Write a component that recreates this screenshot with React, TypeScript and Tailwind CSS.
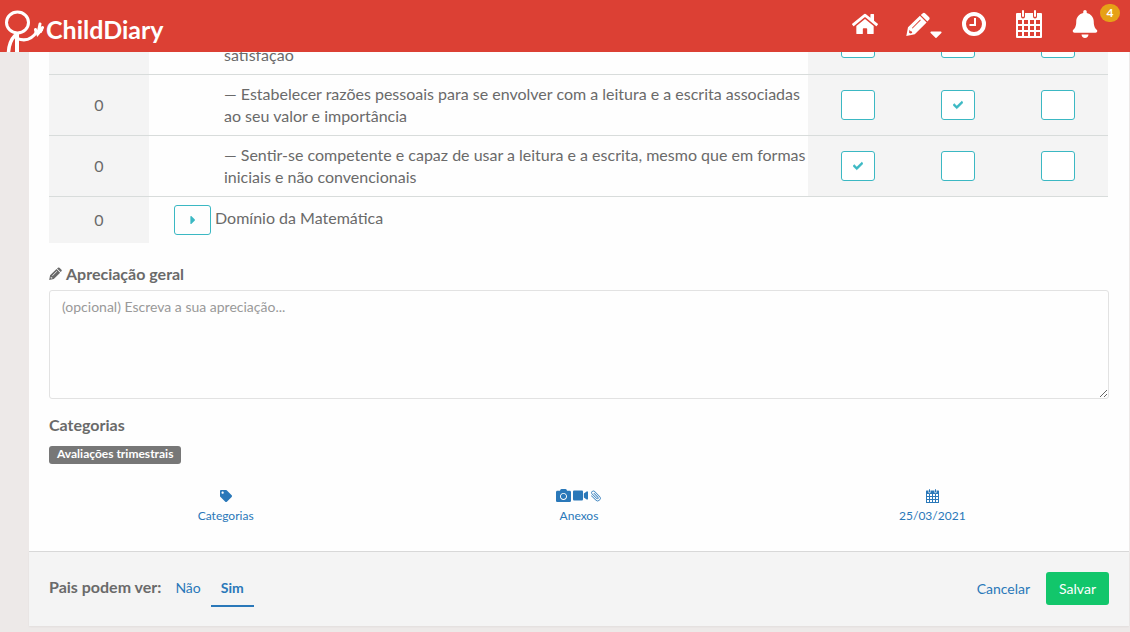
import React, { useState } from 'react';
import { FaBell, FaCamera, FaCaretDown, FaCaretRight, FaCheck, FaHome, FaTag, FaVideo } from 'react-icons/fa';
import { GoPaperclip } from 'react-icons/go';

type Goal = {
  id: string;
  text: string;
  levels: boolean[];
};

const goals: Goal[] = [
  { id: 'prazer', text: 'satisfação', levels: [false, false, false] },
  {
    id: 'razoes',
    text: '— Estabelecer razões pessoais para se envolver com a leitura e a escrita associadas ao seu valor e importância',
    levels: [false, true, false],
  },
  {
    id: 'competente',
    text: '— Sentir-se competente e capaz de usar a leitura e a escrita, mesmo que em formas iniciais e não convencionais',
    levels: [true, false, false],
  },
];

const Logo = () => (
  <svg viewBox="0 0 44 44" className="h-11 w-11" fill="none" stroke="currentColor" strokeLinecap="round" aria-hidden="true">
    <ellipse cx="17.500" cy="14.500" rx="11" ry="10.500" strokeWidth="3" />
    <path d="M17 26v18" strokeWidth="4" />
    <path d="M15 27.500c-4 4-6 9-6.500 16.500" strokeWidth="3.500" />
    <path d="M17 30.500c8 3 15 1 20-7" strokeWidth="3" />
    <path d="M36 24l-.5-2.500M38.500 23l1.500-7M40.500 23.500l2-4" strokeWidth="3" />
    <path d="M36 23h5l-3.500 4z" fill="currentColor" strokeWidth="2" />
  </svg>
);

const PencilIcon = ({ className }: { className: string }) => (
  <svg viewBox="0 0 24 24" className={className} fill="currentColor" aria-hidden="true">
    <path d="M16.500 1.400q1.400-1.400 2.800 0l3.700 3.700q1.300 1.300 0 2.600l-1.600 1.700-6.600-6.500z" />
    <path
      fillRule="evenodd"
      d="M13.900 3.700l6.700 6.700L8.800 22.200.300 24l1.700-8.700zM14.200 7.600l-8.300 8.300.6.600 8.300-8.300zM3.600 17.800l-.6 2.700 1.200.9 2-.5-.3-1.400-1.300-.3z"
    />
  </svg>
);

const CalendarIcon = ({ className }: { className: string }) => (
  <svg viewBox="0 0 26 28" className={className} fill="currentColor" aria-hidden="true">
    <path
      fillRule="evenodd"
      d="M1 3h4v3.500a2 2 0 0 0 4 0V3h8v3.500a2 2 0 0 0 4 0V3h4q1 0 1 1v23q0 1-1 1H1q-1 0-1-1V4q0-1 1-1zM2 10v4h4v-4zM8 10v4h4v-4zM14 10v4h4v-4zM20 10v4h4v-4zM2 16v4h4v-4zM8 16v4h4v-4zM14 16v4h4v-4zM20 16v4h4v-4zM2 22v4h4v-4zM8 22v4h4v-4zM14 22v4h4v-4zM20 22v4h4v-4z"
    />
    <rect x="6" y="0" width="2" height="7" rx="1" />
    <rect x="18" y="0" width="2" height="7" rx="1" />
  </svg>
);

const ClockIcon = () => (
  <svg viewBox="0 0 24 24" className="h-6 w-6" fill="none" stroke="currentColor" aria-hidden="true">
    <circle cx="12" cy="12" r="10" strokeWidth="4" />
    <path d="M13 6v7H7.500" strokeWidth="2" />
  </svg>
);

const Header = () => (
  <header className="fixed inset-x-0 top-0 z-10 flex h-[52px] items-center justify-between bg-[#dc4034] text-white">
    <a href="#" className="flex h-full items-end">
      <Logo />
      <span className="pb-[7px] pl-0.5 text-[25px] leading-8 font-bold">ChildDiary</span>
    </a>
    <nav className="flex items-center pr-2 pb-1">
      <a href="#inicio" aria-label="Início" className="mr-7">
        <FaHome className="h-[26px] w-[26px]" />
      </a>
      <button type="button" aria-label="Escrever" className="mr-5 flex items-end">
        <PencilIcon className="h-6 w-6" />
        <FaCaretDown className="-mb-2 h-5 w-3" />
      </button>
      <a href="#recentes" aria-label="Recentes" className="mr-[30px]">
        <ClockIcon />
      </a>
      <a href="#calendario" aria-label="Calendário" className="mr-[30px]">
        <CalendarIcon className="h-7 w-[26px]" />
      </a>
      <button type="button" aria-label="Notificações" className="relative mr-6">
        <FaBell className="h-7 w-[26px]" />
        <span className="absolute -top-1.5 left-7 flex h-[18px] w-5 items-center justify-center rounded-full bg-[#e6a117] text-xs font-bold">
          4
        </span>
      </button>
    </nav>
  </header>
);

const LevelBox = ({ label, initial }: { label: string; initial: boolean }) => {
  const [checked, setChecked] = useState(initial);
  return (
    <label className="relative inline-flex h-[30px] w-[34px] align-middle">
      <input
        type="checkbox"
        aria-label={label}
        checked={checked}
        onChange={() => setChecked(!checked)}
        className="h-full w-full appearance-none rounded-[3px] border border-[#3bb8c3] bg-white"
      />
      {checked && (
        <FaCheck className="pointer-events-none absolute inset-0 m-auto h-2.5 w-2.5 stroke-[#3bb8c3] stroke-[30] text-[#3bb8c3]" />
      )}
    </label>
  );
};

const GoalsTable = () => (
  <table className="w-[calc(100%-1px)] table-fixed border-collapse">
    <colgroup>
      <col className="w-[100px]" />
      <col />
      <col className="w-[100px]" />
      <col className="w-[100px]" />
      <col className="w-[100px]" />
    </colgroup>
    <tbody>
      {goals.map((goal, row) => (
        <tr key={goal.id} className="h-[61px] border-b border-[#d8dcdb]">
          <td className="bg-[#f4f4f4] text-center">{row > 0 && '0'}</td>
          <td className="py-2 pl-[75px] align-bottom">{goal.text}</td>
          {goal.levels.map((level, i) => (
            <td key={i} className="bg-[#f4f4f4] text-center">
              <LevelBox label={`${goal.text} ${i + 1}`} initial={level} />
            </td>
          ))}
        </tr>
      ))}
      <tr>
        <td className="bg-[#f4f4f4] text-center">0</td>
        <td colSpan={4} className="py-2 pl-[25px]">
          <div className="flex gap-1">
            <button
              type="button"
              aria-label="Expandir"
              className="flex h-[30px] w-[37px] items-center justify-center rounded-[3px] border border-[#3bb8c3] text-[#3bb8c3]"
            >
              <FaCaretRight className="h-3.5 w-3.5" />
            </button>
            <span className="pt-0.5">Domínio da Matemática</span>
          </div>
        </td>
      </tr>
    </tbody>
  </table>
);

const App = () => {
  const [visible, setVisible] = useState(true);

  return (
    <div className="min-h-screen bg-[#ede9e8] pr-px pl-[29px] font-['Lato',sans-serif] text-base leading-[22px] text-[#6a6a6a]">
      <Header />
      <main className="bg-[#fefefe]">
        <div className="px-5 pt-[13px] pb-[27px]">
          <GoalsTable />

          <label htmlFor="apreciacao" className="mt-5 flex items-center gap-1 font-bold">
            <PencilIcon className="h-[13px] w-[13px]" />
            Apreciação geral
          </label>
          <textarea
            id="apreciacao"
            placeholder="(opcional) Escreva a sua apreciação..."
            className="mt-[5px] block h-[109px] w-full resize rounded-[3px] border border-[#e2e2e2] px-3 py-1.5 text-sm leading-5 placeholder:text-[#999]"
          />

          <h2 className="mt-[15px] font-bold">Categorias</h2>
          <span className="mt-2.5 flex h-[18px] w-fit items-center rounded-[3px] bg-[#777] px-2 pb-0.5 text-xs font-bold text-white">
            Avaliações trimestrais
          </span>

          <div className="mt-6 grid grid-cols-3 text-xs leading-4 text-[#2a78b9]">
            <button type="button" className="flex flex-col items-center gap-1">
              <span className="flex h-4 items-center">
                <FaTag className="h-3 w-3" />
              </span>
              Categorias
            </button>
            <button type="button" className="flex flex-col items-center gap-1">
              <span className="flex h-4 items-center gap-0.5">
                <FaCamera className="h-[15px] w-[15px]" />
                <FaVideo className="h-[15px] w-[15px]" />
                <GoPaperclip className="h-3 w-3 -scale-x-100" />
              </span>
              Anexos
            </button>
            <button type="button" className="flex flex-col items-center gap-1">
              <span className="flex h-4 items-center">
                <CalendarIcon className="h-3.5 w-[13px]" />
              </span>
              25/03/2021
            </button>
          </div>
        </div>

        <footer className="flex h-[75px] items-center justify-between border-t border-[#d8d8d8] bg-[#f4f4f4] px-5 shadow-xs">
          <div className="flex items-baseline">
            <span className="mr-1 font-bold">Pais podem ver:</span>
            <div className="flex text-sm leading-[22px] text-[#2a78b9]">
              <button
                type="button"
                onClick={() => setVisible(false)}
                className={`border-b-2 px-2.5 py-1.5 ${visible ? 'border-transparent' : 'border-[#2a78b9] font-bold'}`}
              >
                Não
              </button>
              <button
                type="button"
                onClick={() => setVisible(true)}
                className={`border-b-2 px-2.5 py-1.5 ${visible ? 'border-[#2a78b9] font-bold' : 'border-transparent'}`}
              >
                Sim
              </button>
            </div>
          </div>
          <div className="flex items-center gap-4 text-sm">
            <a href="#cancelar" className="text-[#2a78b9]">
              Cancelar
            </a>
            <button type="button" className="h-[33px] rounded-[3px] bg-[#12c66b] px-[13px] text-white">
              Salvar
            </button>
          </div>
        </footer>
      </main>
    </div>
  );
};

export default App;
